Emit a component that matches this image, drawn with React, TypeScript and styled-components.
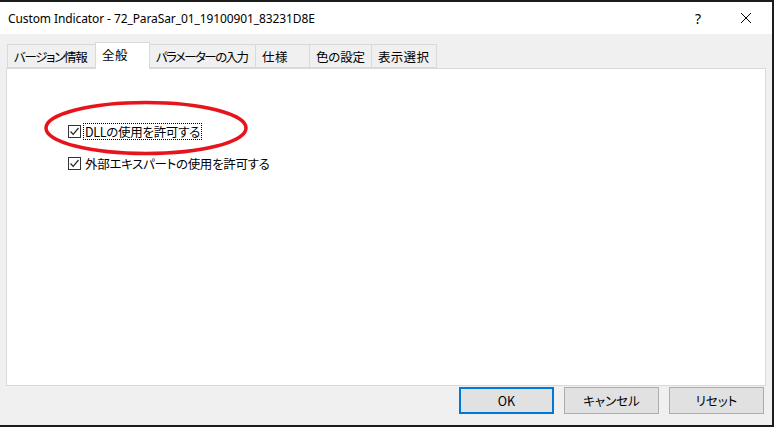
import React from "react";
import styled, { createGlobalStyle } from "styled-components";

const GlobalStyle = createGlobalStyle`
  html, body {
    margin: 0;
    padding: 0;
    background: #f0f0f0;
  }
  body {
    font-family: "Noto Sans", "Noto Sans CJK JP", sans-serif;
  }
`;

const Window = styled.div`
  width: 774px;
  height: 427px;
  box-sizing: border-box;
  border-top: 2px solid #1c1c1c;
  border-right: 2px solid #1c1c1c;
  border-bottom: 2px solid #1c1c1c;
  background: #f0f0f0;
  display: flex;
  flex-direction: column;
  overflow: hidden;
`;

const TitleBar = styled.div`
  height: 32px;
  background: #ffffff;
  display: flex;
  align-items: center;
  padding: 0 3px 0 8px;
  flex-shrink: 0;
`;

const Title = styled.div`
  flex: 1;
  font-size: 12px;
  color: #000;
  font-family: "Noto Sans", sans-serif;
  letter-spacing: -0.1px;
`;

const TitleButton = styled.div<{ $w: number }>`
  width: ${(p) => p.$w}px;
  height: 32px;
  display: flex;
  align-items: center;
  justify-content: center;
  font-size: 14px;
  color: #000;
`;

const Body = styled.div`
  flex: 1;
  display: flex;
  flex-direction: column;
  padding: 8px 6px 0 6px;
`;

const TabStrip = styled.div`
  display: flex;
  align-items: flex-end;
  height: 26px;
  padding-left: 2px;
  position: relative;
  z-index: 1;
`;

const Tab = styled.div<{ $active?: boolean; $w: number; $ls: number }>`
  width: ${(p) => p.$w}px;
  height: ${(p) => (p.$active ? "27px" : "24px")};
  box-sizing: border-box;
  display: flex;
  align-items: center;
  padding-left: 6px;
  font-family: "Noto Sans CJK JP", sans-serif;
  font-feature-settings: "palt";
  font-size: 12.5px;
  letter-spacing: ${(p) => p.$ls}px;
  color: #000;
  white-space: nowrap;
  overflow: hidden;
  background: ${(p) => (p.$active ? "#ffffff" : "#f0f0f0")};
  border: 1px solid #d9d9d9;
  border-bottom: ${(p) => (p.$active ? "none" : "1px solid #d9d9d9")};
  margin-left: -1px;
  margin-bottom: ${(p) => (p.$active ? "-1px" : "0")};
  padding-bottom: ${(p) => (p.$active ? "3px" : "0")};
  z-index: ${(p) => (p.$active ? 2 : 1)};
  position: relative;
`;

const Panel = styled.div`
  height: 318px;
  background: #ffffff;
  border: 1px solid #d9d9d9;
  box-sizing: border-box;
  position: relative;
  padding: 55px 0 0 61px;
  display: flex;
  flex-direction: column;
  gap: 17px;
`;

const CheckRow = styled.label`
  display: flex;
  align-items: center;
  gap: 3px;
  font-family: "Noto Sans CJK JP", sans-serif;
  font-feature-settings: "palt";
  font-size: 12.5px;
  letter-spacing: -0.3px;
  color: #000;
  height: 15px;
  white-space: nowrap;
`;

const Box = styled.span`
  width: 13px;
  height: 13px;
  box-sizing: border-box;
  border: 1px solid #333;
  background: #fff;
  display: flex;
  align-items: center;
  justify-content: center;
`;

const Label = styled.span<{ $focus?: boolean }>`
  outline: ${(p) => (p.$focus ? "1px dotted #000" : "none")};
  padding: 0 1px;
  line-height: 15px;
`;

const Ellipse = styled.svg`
  position: absolute;
  left: 33px;
  top: 30px;
  pointer-events: none;
`;

const ButtonRow = styled.div`
  display: flex;
  justify-content: flex-end;
  gap: 10px;
  padding: 1px 2px 0 0;
`;

const Button = styled.div<{ $primary?: boolean }>`
  width: 95px;
  height: 27px;
  box-sizing: border-box;
  border: ${(p) => (p.$primary ? "2px solid #0078d7" : "1px solid #adadad")};
  background: #e1e1e1;
  display: flex;
  align-items: center;
  justify-content: center;
  font-family: "Noto Sans CJK JP", sans-serif;
  font-feature-settings: "palt";
  font-size: 12.5px;
  color: #000;
`;

const Check = () => (
  <svg width="11" height="11" viewBox="0 0 11 11">
    <path d="M1.5 5.5 L4.2 8.3 L9.5 2" fill="none" stroke="#222" strokeWidth="1.2" />
  </svg>
);

const tabs = [
  { label: "バージョン情報", w: 89, ls: -1.3 },
  { label: "全般", w: 55, ls: 0.5, active: true },
  { label: "パラメーターの入力", w: 107, ls: -1.6 },
  { label: "仕様", w: 55, ls: 0.5 },
  { label: "色の設定", w: 63, ls: -0.2 },
  { label: "表示選択", w: 66, ls: 0.3 },
];

export default function App() {
  return (
    <>
      <GlobalStyle />
      <Window>
        <TitleBar>
          <Title>Custom Indicator - 72_ParaSar_01_19100901_83231D8E</Title>
          <TitleButton $w={50}>?</TitleButton>
          <TitleButton $w={46}>
            <svg width="12" height="12" viewBox="0 0 12 12">
              <path d="M1 1 L11 11 M11 1 L1 11" stroke="#000" strokeWidth="1" />
            </svg>
          </TitleButton>
        </TitleBar>
        <Body>
          <TabStrip>
            {tabs.map((t) => (
              <Tab key={t.label} $w={t.w} $ls={t.ls} $active={t.active}>
                {t.label}
              </Tab>
            ))}
          </TabStrip>
          <Panel>
            <CheckRow>
              <Box>
                <Check />
              </Box>
              <Label $focus>DLLの使用を許可する</Label>
            </CheckRow>
            <CheckRow>
              <Box>
                <Check />
              </Box>
              <Label>外部エキスパートの使用を許可する</Label>
            </CheckRow>
            <Ellipse width="212" height="58" viewBox="0 0 212 58">
              <ellipse cx="106" cy="29" rx="100" ry="25.5" fill="none" stroke="#e8141c" strokeWidth="3.5" />
            </Ellipse>
          </Panel>
          <ButtonRow>
            <Button $primary>OK</Button>
            <Button>キャンセル</Button>
            <Button>リセット</Button>
          </ButtonRow>
        </Body>
      </Window>
    </>
  );
}
